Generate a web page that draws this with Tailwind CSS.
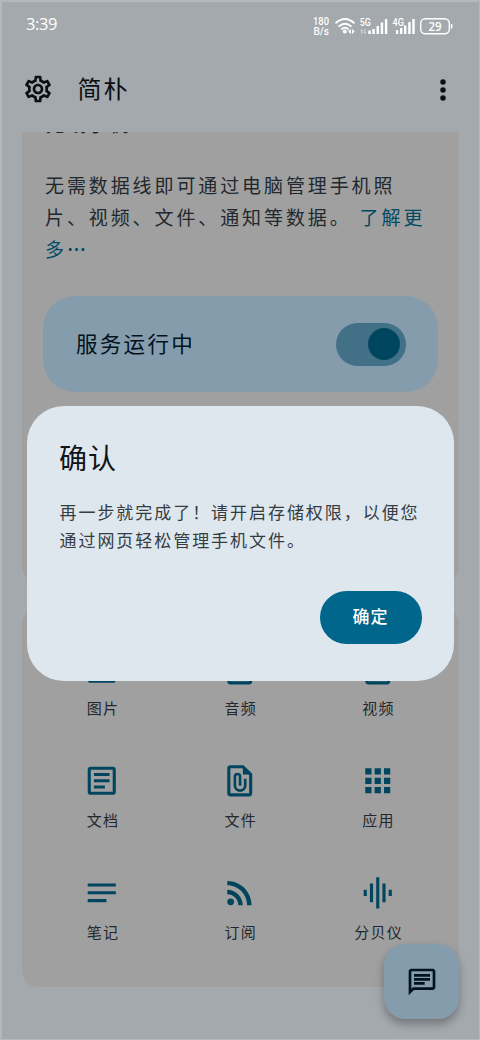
<!DOCTYPE html>
<html lang="zh-CN">
<head>
<meta charset="utf-8">
<title>简朴</title>
<script src="https://cdn.jsdelivr.net/npm/@tailwindcss/browser@4"></script>
</head>
<body class="relative flex h-[1040px] w-[480px] flex-col overflow-hidden border-t-2 border-r border-b border-l-2 border-[#b4b9bd] bg-[#a4a9ad] font-['Noto_Sans_CJK_SC',sans-serif] font-normal whitespace-nowrap text-[#22282d]">

  <!-- Status bar -->
  <header class="flex h-[44px] shrink-0 items-center justify-between pr-[25px] pl-[24px] text-white">
    <span class="mt-px font-['Open_Sans',sans-serif] text-[16.500px] leading-none font-medium tracking-[-0.400px]">3:39</span>
    <svg class="mt-1 h-[24px] w-[142px]" viewBox="312 12 142 24" fill="#fff">
      <g font-family="Roboto,sans-serif" font-weight="500">
        <text x="313" y="23" font-size="10" textLength="16" lengthAdjust="spacingAndGlyphs">180</text>
        <text x="313.500" y="33" font-size="10" textLength="15.500" lengthAdjust="spacingAndGlyphs">B/s</text>
        <text x="359.700" y="24.300" font-size="10" textLength="11" lengthAdjust="spacingAndGlyphs">5G</text>
        <text x="392.500" y="24.300" font-size="10" textLength="11.500" lengthAdjust="spacingAndGlyphs">4G</text>
      </g>
      <g fill="none" stroke="#fff" stroke-width="1.900">
        <path d="M335.500 21.400Q345 12.700 354.500 21.400M338.500 24.600Q345 18.800 351.500 24.600M341.300 27.400Q345 24.300 348.700 27.400"/>
      </g>
      <circle cx="344.800" cy="29.500" r="2"/>
      <path d="M351 27v5l-3-2.500zM352 27v5l2.700-2.500z"/>
      <path opacity=".45" d="M361.700 27l2 2h-1.300v3h-1.300v-3h-1.200zM365 32l-2-2h1.300v-3h1.200v3h1.300z"/>
      <path d="M368.300 28.500h2.500v3.500h-2.500zM372.300 27h2.500v5h-2.500zM376.500 24h2.500v8h-2.500zM380.700 20.500h2.500v11.500h-2.500zM384.900 17h2.400v15h-2.400z"/>
      <path d="M396 28h2.300v4h-2.300zM400 26h2.400v6h-2.400zM404 23.500h2.400v8.500h-2.400zM408.200 20h2.400v12h-2.400zM412.300 17h2.400v15h-2.400z"/>
      <rect x="420.700" y="16.700" width="28.600" height="15" rx="4.500" fill="none" stroke="#fff" stroke-width="1.400"/>
      <rect x="450.700" y="22" width="1.800" height="4.500" rx=".8"/>
      <text x="428.500" y="28.700" font-family="Open Sans,sans-serif" font-size="12.500" font-weight="600" textLength="13" lengthAdjust="spacingAndGlyphs">29</text>
    </svg>
  </header>

  <!-- App bar -->
  <nav class="flex h-[86px] shrink-0 items-center pr-[20.500px] pl-[19.500px] text-[#0b0f12]">
    <svg class="size-8" viewBox="0 0 24 24" fill="currentColor"><path d="M19.430 12.980c.04-.32.07-.64.07-.98s-.03-.66-.07-.98l2.110-1.650c.19-.15.24-.42.12-.64l-2-3.460c-.12-.22-.39-.3-.61-.22l-2.490 1c-.52-.4-1.080-.73-1.690-.98l-.38-2.650C14.460 2.180 14.250 2 14 2h-4c-.25 0-.46.18-.49.42l-.38 2.650c-.61.25-1.170.59-1.690.98l-2.490-1c-.23-.09-.49 0-.61.22l-2 3.460c-.13.22-.07.49.12.64l2.110 1.650c-.04.32-.07.65-.07.98s.03.66.07.98l-2.110 1.650c-.19.15-.24.42-.12.64l2 3.460c.12.22.39.3.61.22l2.490-1c.52.4 1.080.73 1.690.98l.38 2.650c.03.24.24.42.49.42h4c.25 0 .46-.18.49-.42l.38-2.650c.61-.25 1.170-.59 1.690-.98l2.490 1c.23.09.49 0 .61-.22l2-3.460c.12-.22.07-.49-.12-.64l-2.110-1.650zm-1.980-1.710c.04.31.05.52.05.73s-.02.43-.05.73l-.14 1.130.89.7 1.080.84-.7 1.210-1.270-.51-1.040-.42-.9.68c-.43.32-.84.56-1.250.73l-1.060.43-.16 1.130-.2 1.350h-1.400l-.19-1.350-.16-1.130-1.060-.43c-.43-.18-.83-.41-1.230-.71l-.91-.7-1.060.43-1.270.51-.7-1.210 1.080-.84.89-.7-.14-1.130c-.03-.31-.05-.54-.05-.74s.02-.43.05-.73l.14-1.130-.89-.7-1.080-.84.7-1.210 1.270.51 1.040.42.9-.68c.43-.32.84-.56 1.250-.73l1.060-.43.16-1.130.2-1.350h1.390l.19 1.350.16 1.130 1.060.43c.43.18.83.41 1.230.71l.91.7 1.060-.43 1.270-.51.7 1.210-1.070.85-.89.7.14 1.130zM12 8c-2.210 0-4 1.790-4 4s1.790 4 4 4 4-1.790 4-4-1.790-4-4-4zm0 6c-1.100 0-2-.9-2-2s.9-2 2-2 2 .9 2 2-.9 2-2 2z"/></svg>
    <h1 class="-mt-[3px] ml-[24px] text-[24px] leading-8 tracking-[2px]">简朴</h1>
    <svg class="mt-px ml-auto size-8" viewBox="0 0 24 24" fill="currentColor"><circle cx="12" cy="6" r="2.050"/><circle cx="12" cy="12" r="2.050"/><circle cx="12" cy="18" r="2.050"/></svg>
  </nav>

  <!-- Scrolled content -->
  <main class="flex flex-1 flex-col gap-[25px] overflow-hidden pr-[20.500px] pl-5">
    <section class="h-[451px] shrink-0 overflow-hidden rounded-b-[16px] bg-[#a0a0a0] px-[21px]">
      <div class="-mt-[20px] h-[24px] pl-[3px] text-[19px] leading-6 tracking-[2px]">无线手机</div>
      <p class="mt-[33px] pl-[2px] text-[19px] leading-8 tracking-[2.900px]">无需数据线即可通过电脑管理手机照<br>片、视频、文件、通知等数据。<span class="ml-[8px] text-[#004a66]">了解更<br>多<span class="font-bold tracking-normal">⋯</span></span></p>
      <div class="mt-[31px] flex h-24 items-center justify-between rounded-[32px] bg-[#859cac] pr-8 pl-[33px]">
        <span class="-mt-[2px] text-[21.500px] tracking-[2.300px] text-[#00131e]">服务运行中</span>
        <span class="flex h-[43px] w-[70px] items-center justify-end rounded-full bg-[#427086] pr-[5.500px]"><span class="size-8 rounded-full bg-[#00455e]"></span></span>
      </div>
    </section>

    <section class="grid h-[379px] shrink-0 auto-rows-[112px] grid-cols-3 rounded-[16px] bg-[#a0a0a0] pr-[12px] pl-[11px] pt-[42px] text-center text-[15px] leading-5 tracking-[1.200px] [&_span]:pl-[2px] [&_svg]:size-[37.500px] [&_svg]:text-[#00455e] [&>div]:flex [&>div]:flex-col [&>div]:items-center [&>div]:gap-[10.500px]">
      <div><svg viewBox="0 0 24 24" fill="none" stroke="currentColor" stroke-width="2"><rect x="4" y="4" width="16" height="16" rx="1"/></svg><span>图片</span></div>
      <div><svg viewBox="0 0 24 24" fill="none" stroke="currentColor" stroke-width="2"><rect x="5" y="3" width="14" height="18" rx="1"/></svg><span>音频</span></div>
      <div><svg viewBox="0 0 24 24" fill="none" stroke="currentColor" stroke-width="2"><rect x="5" y="3" width="14" height="18" rx="1"/></svg><span>视频</span></div>
      <div><svg viewBox="0 0 24 24" fill="none" stroke="currentColor" stroke-width="2"><rect x="4" y="4" width="16" height="16" rx="1"/><path d="M7 8h10M7 12h10M7 16h7"/></svg><span>文档</span></div>
      <div><svg viewBox="0 0 24 24" fill="none" stroke="currentColor" stroke-width="2"><path d="M19 8v12a1 1 0 0 1-1 1H6a1 1 0 0 1-1-1V4a1 1 0 0 1 1-1h8z"/><path d="M14 3v5h5z" fill="currentColor" stroke="none"/><path stroke-width="1.700" d="M12.200 9.800v5.400M12.200 15.200V9.300a1.650 1.650 0 0 0-3.300 0v5.700a3.300 3.300 0 0 0 6.600 0v-4.300"/></svg><span>文件</span></div>
      <div><svg viewBox="0 0 24 24" fill="currentColor"><path d="M4 4h4v4H4zM10 4h4v4h-4zM16 4h4v4h-4zM4 10h4v4H4zM10 10h4v4h-4zM16 10h4v4h-4zM4 16h4v4H4zM10 16h4v4h-4zM16 16h4v4h-4z"/></svg><span>应用</span></div>
      <div><svg viewBox="0 0 24 24" fill="currentColor"><path d="M3 6h18v2H3zM3 11h18v2H3zM3 16h12v2H3z"/></svg><span>笔记</span></div>
      <div><svg viewBox="0 0 24 24" fill="currentColor"><circle cx="6.180" cy="17.820" r="2.180"/><path d="M4 4.440v2.830c7.030 0 12.730 5.700 12.730 12.730h2.830c0-8.590-6.970-15.560-15.560-15.560zm0 5.660v2.830c3.900 0 7.070 3.170 7.070 7.070h2.830c0-5.470-4.430-9.900-9.900-9.900z"/></svg><span>订阅</span></div>
      <div><svg viewBox="0 0 24 24" fill="currentColor"><path d="M7 18h2V6H7v12zm4 4h2V2h-2v20zm-8-8h2v-4H3v4zm12 4h2V6h-2v12zm4-8v4h2v-4h-2z"/></svg><span>分贝仪</span></div>
    </section>
  </main>

  <!-- Floating chat button -->
  <button class="absolute right-[20px] bottom-[20px] flex size-[75px] items-center justify-center rounded-[21px] bg-[#859cac] text-[#00131e] shadow-[0_5px_10px_rgba(0,0,0,0.3)]">
    <svg class="size-8" viewBox="0 0 24 24" fill="currentColor"><path d="M4 4h16v12H5.170L4 17.170V4m0-2c-1.100 0-1.990.9-1.990 2L2 22l4-4h14c1.100 0 2-.9 2-2V4c0-1.100-.9-2-2-2H4zm2 10h8v2H6v-2zm0-3h12v2H6V9zm0-3h12v2H6V6z"/></svg>
  </button>

  <!-- Confirmation dialog -->
  <div role="dialog" class="absolute top-[404px] left-[25px] flex h-[275px] w-[426.500px] flex-col rounded-[37px] bg-[#dfe7ee] px-8 pt-[33px] pb-[37.500px]">
    <h2 class="text-[28px] leading-9 tracking-[1px] text-[#111518]">确认</h2>
    <p class="mt-[23px] pl-[0.500px] text-[17px] leading-7 tracking-[1.950px] text-[#353d43]">再一步就完成了！请开启存储权限，以便您<br>通过网页轻松管理手机文件。</p>
    <button class="mt-auto flex h-[53px] w-[102px] items-center justify-center self-end rounded-full bg-[#00668b] pb-[2px] text-[17px] font-medium tracking-[1px] text-white">确定</button>
  </div>
</body>
</html>
